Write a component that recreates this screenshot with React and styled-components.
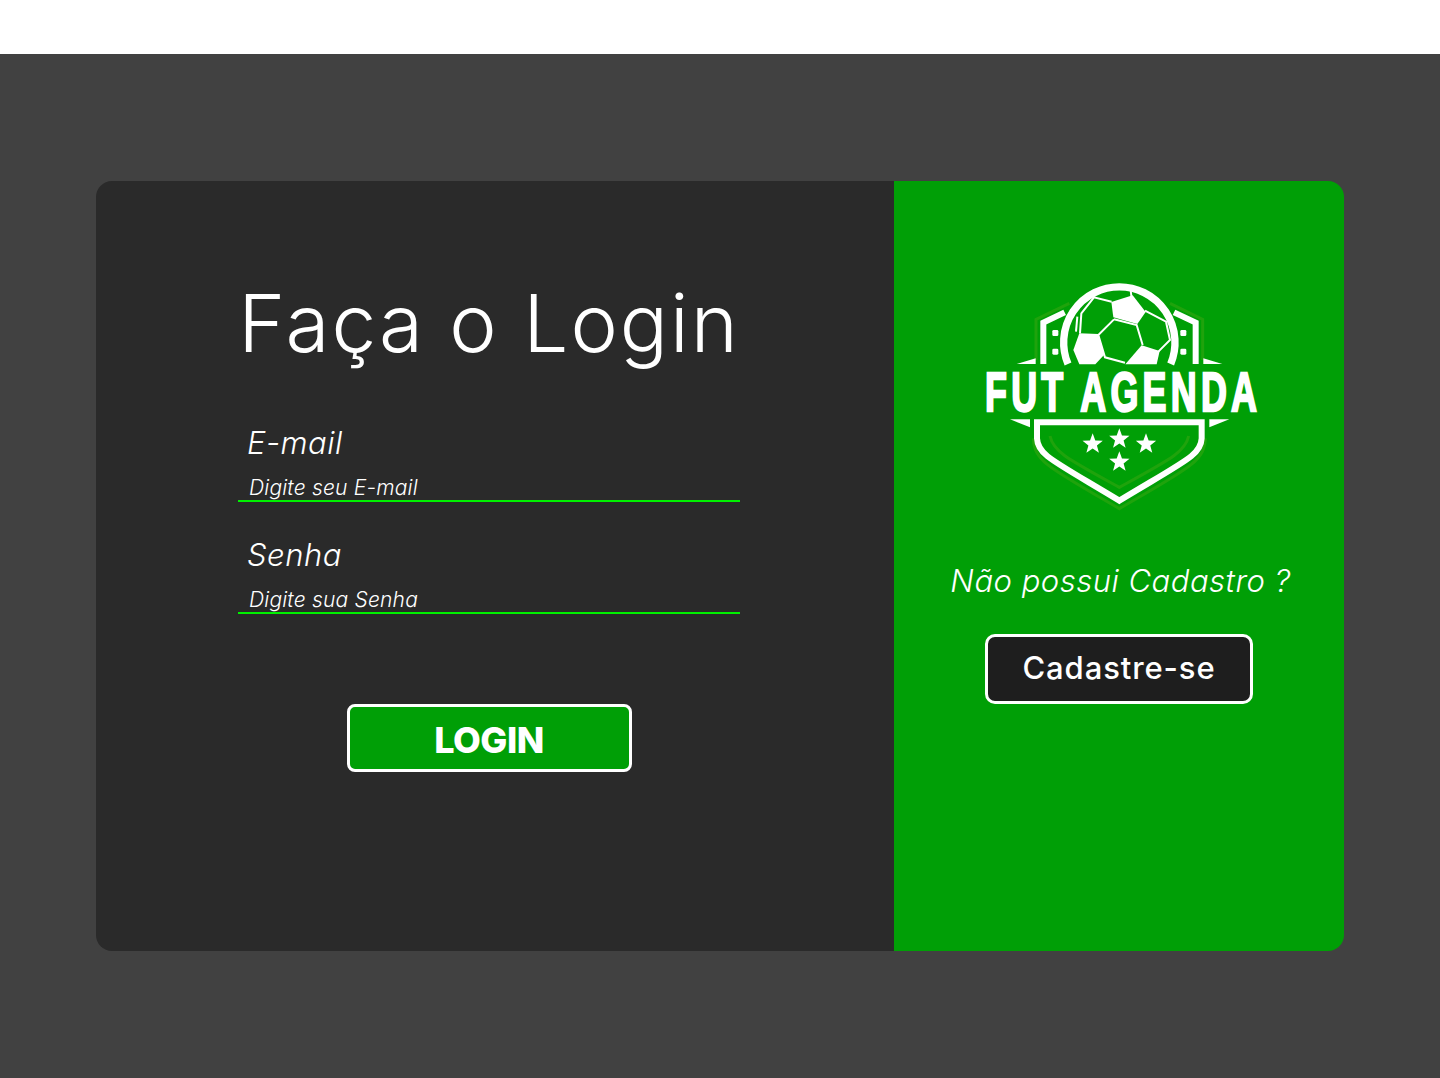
import React from 'react';
import styled, { createGlobalStyle } from 'styled-components';

const Global = createGlobalStyle`
  html, body { margin: 0; padding: 0; background: #fff; }
  * { box-sizing: border-box; }
  body { font-family: Inter, "Noto Sans", sans-serif; }
`;
const TopBar = styled.header`height: 54px; background: #fff;`;
const Main = styled.main`
  height: 1024px; background: #414141;
  display: flex; align-items: center; justify-content: center;
`;
const Card = styled.section`
  width: 1248px; height: 770px; display: flex; border-radius: 16px; overflow: hidden;
`;
const LoginPanel = styled.div`
  width: 798px; background: #2a2a2a; padding: 98px 0 0 142px;
`;
const Form = styled.form`
  width: 502px; display: flex; flex-direction: column;
`;
const Title = styled.h1`
  margin: 0 0 56px; font-size: 80px; line-height: 88px; font-weight: 350; color: #fff;
  text-align: center; white-space: nowrap; letter-spacing: 2px;
`;
const Field = styled.label`
  display: flex; flex-direction: column; margin-bottom: 33px;
`;
const FieldName = styled.span`
  font-size: 31px; line-height: 40px; font-style: italic; font-weight: 350; color: #fff;
  padding-left: 9px; letter-spacing: 0.5px;
`;
const Input = styled.input`
  height: 39px; padding: 11px 11px 0; background: transparent; border: 0;
  border-bottom: 2px solid #00f000; outline: none; color: #fff;
  font: italic 350 21px Inter, sans-serif; letter-spacing: 0.2px;
  &::placeholder { color: #fff; opacity: 1; }
`;
const LoginButton = styled.button`
  align-self: center; width: 285px; height: 68px; margin: 57px 0 0; padding: 4px 0 0; background: #009f06;
  border: 3px solid #fff; border-radius: 8px; color: #fff;
  font: 800 36px Inter, sans-serif; letter-spacing: -0.5px;
`;
const SidePanel = styled.aside`
  width: 450px; background: #009f06; padding-top: 89px;
  display: flex; flex-direction: column; align-items: center;
`;
const Logo = styled.svg`width: 300px; height: 250px; display: block; flex: none; margin-left: 2px;`;
const Prompt = styled.p`
  margin: 41px 0 33px; padding-left: 3px; font-size: 31px; line-height: 40px; font-style: italic; font-weight: 350;
  color: #fff; white-space: nowrap; letter-spacing: 0.5px;
`;
const SignupButton = styled.button`
  width: 268px; height: 70px; padding: 0 0 3px; background: #1e1e1e; border: 3px solid #fff; border-radius: 10px;
  color: #fff; font: 500 31px Inter, sans-serif; letter-spacing: 0.9px;
`;

const star = (cx, cy, r) => {
  const pts = [];
  for (let i = 0; i < 10; i++) {
    const a = -Math.PI / 2 + (i * Math.PI) / 5;
    const rr = i % 2 ? r * 0.42 : r;
    pts.push(`${cx + rr * Math.cos(a)},${cy + rr * Math.sin(a)}`);
  }
  return pts.join(' ');
};

const FutLogo = () => (
  <Logo viewBox="0 0 900 750" role="img" aria-label="Fut Agenda">
    <g fill="none" stroke="#1fa30c" strokeWidth="9">
      <path d="M298 100 L198 148 V270" />
      <path d="M600 100 L698 148 V270" />
      <path d="M240 498 C250 545 290 565 448 652 C606 565 646 545 656 498" />
      <path d="M190 505 C193 575 240 595 448 716 C656 595 703 575 706 505" />
    </g>
    <g fill="none" stroke="#fff">
      <path d="M294 282 A167 167 0 1 1 602 282" strokeWidth="22" />
      <path d="M284 127 L220 158 V282" strokeWidth="18" />
      <path d="M612 127 L677 158 V282" strokeWidth="18" />
      <path d="M201 457 H695 V505 C693 555 650 570 448 692 C246 570 203 555 201 505 Z" strokeWidth="18" />
      <g strokeWidth="6">
        <path d="M432 148 L500 165 L518 225 M465 278 L405 262 L385 195 L432 148" />
        <path d="M425 95 L372 82 L334 130 L330 190" />
        <path d="M484 78 L482 60" />
        <path d="M525 122 L588 155 L600 210 L565 245" />
        <path d="M322 140 L318 185" />
      </g>
    </g>
    <g fill="#fff">
      <polygon points="424,96 488,76 527,126 502,162 430,142" />
      <polygon points="328,190 385,192 402,255 376,283 328,283 310,240" />
      <polygon points="466,283 515,226 569,243 560,283" />
      <rect x="247" y="180" width="18" height="18" rx="4" />
      <rect x="247" y="236" width="18" height="18" rx="4" />
      <rect x="631" y="180" width="18" height="18" rx="4" />
      <rect x="631" y="236" width="18" height="18" rx="4" />
      <polygon points="140,282 197,265 197,282" />
      <polygon points="700,265 757,282 700,282" />
      <polygon points="120,448 180,448 180,472" />
      <polygon points="778,448 718,448 718,472" />
      <polygon points={star(368, 522, 32)} />
      <polygon points={star(448, 507, 32)} />
      <polygon points={star(528, 522, 32)} />
      <polygon points={star(448, 576, 32)} />
      <text
        transform="translate(45 423) scale(0.64 1)" letterSpacing="20"
        fontFamily="'Liberation Sans', sans-serif" fontWeight="700" fontSize="168"
        stroke="#fff" strokeWidth="7"
      >FUT AGENDA</text>
    </g>
  </Logo>
);

export default function App() {
  return (
    <>
      <Global />
      <TopBar />
      <Main>
        <Card>
          <LoginPanel>
            <Form onSubmit={(e) => e.preventDefault()}>
              <Title>Faça o Login</Title>
              <Field>
                <FieldName>E-mail</FieldName>
                <Input type="email" placeholder="Digite seu E-mail" />
              </Field>
              <Field>
                <FieldName>Senha</FieldName>
                <Input type="password" placeholder="Digite sua Senha" />
              </Field>
              <LoginButton type="submit">LOGIN</LoginButton>
            </Form>
          </LoginPanel>
          <SidePanel>
            <FutLogo />
            <Prompt>Não possui Cadastro ?</Prompt>
            <SignupButton type="button">Cadastre-se</SignupButton>
          </SidePanel>
        </Card>
      </Main>
    </>
  );
}
